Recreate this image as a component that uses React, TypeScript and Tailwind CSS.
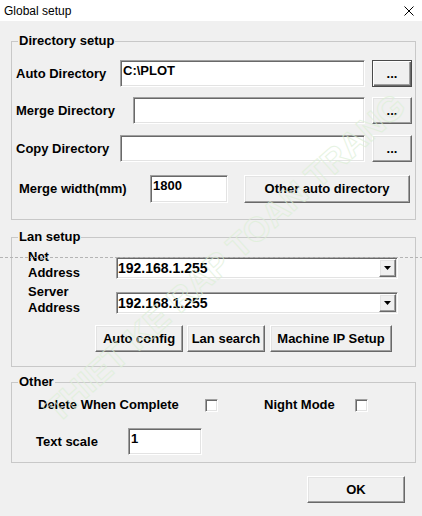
import type { ReactNode } from "react";
import clsx from "clsx";

// classic win32 3D borders
const sunken =
  "bg-white border border-t-[#a0a0a0] border-l-[#a0a0a0] border-b-white border-r-white shadow-[inset_1px_1px_0_#696969,inset_-1px_-1px_0_#e3e3e3]";
const raised =
  "bg-[#f0f0f0] border border-t-white border-l-white border-b-[#696969] border-r-[#696969] shadow-[inset_-1px_-1px_0_#a0a0a0,inset_1px_1px_0_#e3e3e3]";

function Group({ title, className, children }: { title: string; className?: string; children: ReactNode }) {
  return (
    <fieldset className={clsx("border border-[#c8c8c8]", className)}>
      <legend className="ml-[6px] px-[1px] text-[13px] font-bold leading-[16px]">{title}</legend>
      {children}
    </fieldset>
  );
}

function Field({ value, className }: { value?: string; className?: string }) {
  return (
    <div className={clsx(sunken, "shrink-0 pl-[2px] pt-[2px] text-[13px] font-bold leading-[16px]", className)}>
      {value}
    </div>
  );
}

function Button({ label, className, isDefault }: { label: string; className?: string; isDefault?: boolean }) {
  return (
    <button
      type="button"
      className={clsx(
        "shrink-0 flex items-center justify-center text-[13px] font-bold leading-[16px] text-black",
        isDefault
          ? "bg-[#f0f0f0] border border-[#4a4a4a] shadow-[inset_1px_1px_0_#fff,inset_-1px_-1px_0_#696969,inset_-2px_-2px_0_#a0a0a0]"
          : raised,
        className
      )}
    >
      {label}
    </button>
  );
}

function Combo({ value, className }: { value: string; className?: string }) {
  return (
    <div className={clsx(sunken, "shrink-0 flex items-center pl-[1px] pr-[1px] h-[22px] w-[282px]", className)}>
      <span className="flex-1 text-[14px] font-bold leading-[16px]">{value}</span>
      <span className={clsx(raised, "w-[17px] h-[18px] flex items-center justify-center")}>
        <svg width="7" height="4" viewBox="0 0 7 4">
          <path d="M0 0h7L3.5 4z" fill="#000" />
        </svg>
      </span>
    </div>
  );
}

function Check() {
  return <span className={clsx(sunken, "shrink-0 w-[13px] h-[13px]")} />;
}

export default function App() {
  return (
    <div className="relative w-[422px] h-[516px] overflow-hidden bg-[#f0f0f0] text-black font-['Liberation_Sans',Arial,sans-serif]">
      {/* Title bar */}
      <div className="h-[21px] bg-white flex items-center justify-between pl-[4px] pr-[8px]">
        <span className="text-[12px] leading-none">Global setup</span>
        <svg width="10" height="10" viewBox="0 0 10 10">
          <path d="M0.5 0.5l9 9M9.5 0.5l-9 9" stroke="#000" strokeWidth="1" />
        </svg>
      </div>

      <div className="pl-[11px] pr-[6px] pt-[12px]">
        {/* Directory setup */}
        <Group title="Directory setup" className="pb-[16px]">
          <div className="mt-[11px] flex items-center h-[27px]">
            <span className="w-[108px] pl-[4px] text-[13px] font-bold">Auto Directory</span>
            <Field value="C:\PLOT" className="w-[245px] h-[27px]" />
            <Button label="..." isDefault className="ml-[7px] w-[40px] h-[27px]" />
          </div>
          <div className="mt-[10px] flex items-center h-[27px]">
            <span className="w-[121px] pl-[4px] text-[13px] font-bold">Merge Directory</span>
            <Field className="w-[232px] h-[27px]" />
            <Button label="..." className="ml-[7px] w-[40px] h-[27px]" />
          </div>
          <div className="mt-[11px] flex items-center h-[27px]">
            <span className="w-[108px] pl-[4px] text-[13px] font-bold">Copy Directory</span>
            <Field className="w-[245px] h-[27px]" />
            <Button label="..." className="ml-[7px] w-[40px] h-[27px]" />
          </div>
          <div className="mt-[13px] flex items-center h-[28px]">
            <span className="w-[138px] pl-[7px] text-[13px] font-bold">Merge width(mm)</span>
            <Field value="1800" className="w-[78px] h-[28px]" />
            <Button label="Other auto directory" className="ml-[16px] w-[166px] h-[28px]" />
          </div>
        </Group>

        {/* Lan setup */}
        <Group title="Lan setup" className="mt-[9px] pb-[14px]">
          <div className="mt-[4px] flex items-start">
            <span className="w-[104px] pl-[16px] text-[13px] font-bold leading-[16px]">
              Net
              <br />
              Address
            </span>
            <Combo value="192.168.1.255" className="mt-[8px]" />
          </div>
          <div className="mt-[3px] flex items-start">
            <span className="w-[104px] pl-[16px] text-[13px] font-bold leading-[16px]">
              Server
              <br />
              Address
            </span>
            <Combo value="192.168.1.255" className="mt-[8px]" />
          </div>
          <div className="mt-[9px] flex pl-[83px]">
            <Button label="Auto config" className="w-[88px] h-[27px]" />
            <Button label="Lan search" className="ml-[4px] w-[78px] h-[27px]" />
            <Button label="Machine IP Setup" className="ml-[5px] w-[122px] h-[27px]" />
          </div>
        </Group>

        {/* Other */}
        <Group title="Other" className="mt-[7px] pb-[7px]">
          <div className="mt-[7px] flex items-center h-[16px] pl-[26px] text-[13px] font-bold">
            <span className="w-[167px]">Delete When Complete</span>
            <Check />
            <span className="ml-[46px] w-[91px]">Night Mode</span>
            <Check />
          </div>
          <div className="mt-[15px] flex items-center h-[27px] pl-[24px]">
            <span className="w-[92px] text-[13px] font-bold">Text scale</span>
            <Field value="1" className="w-[74px] h-[27px]" />
          </div>
        </Group>

        <div className="mt-[13px] flex justify-end">
          <Button label="OK" className="mr-[11px] w-[98px] h-[27px]" />
        </div>
      </div>

      {/* focus dash line across the dialog */}
      <div className="pointer-events-none absolute left-0 right-0 top-[257px] h-px bg-[repeating-linear-gradient(90deg,#b4b4b4_0_3px,transparent_3px_5px)]" />

      {/* watermark */}
      <div className="pointer-events-none absolute left-[225px] top-[258px] -translate-x-1/2 -translate-y-1/2 -rotate-[42deg] whitespace-nowrap text-[34px] font-bold text-transparent [-webkit-text-stroke:1px_#dcefd6] opacity-70">
        THIET KE RAP TOAN TRANG
      </div>
    </div>
  );
}
